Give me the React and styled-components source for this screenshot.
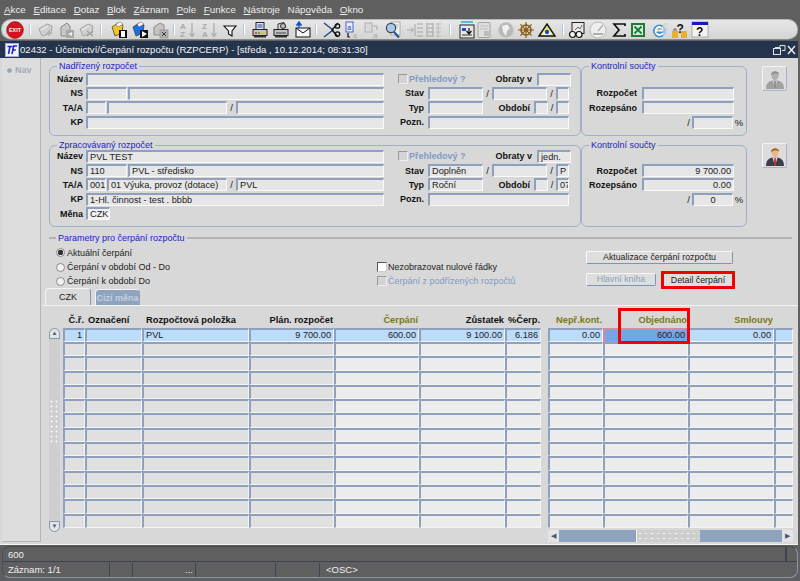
import React from 'react';
import styled, { createGlobalStyle } from 'styled-components';

const GlobalStyle = createGlobalStyle`
  html, body { margin: 0; padding: 0; background: #606060; }
  body { font-family: "Liberation Sans", Arial, sans-serif; font-size: 9.2px; }
  * { box-sizing: border-box; }
`;

const Page = styled.div`
  width: 800px;
  height: 581px;
  overflow: hidden;
  display: flex;
  flex-direction: column;
  background: #5f5f5f;
`;

/* menu + toolbar */
const MenuBar = styled.div`
  height: 19px;
  display: flex;
  align-items: center;
  padding-left: 4px;
  gap: 7.6px;
  color: #ececec;
  font-size: 9.8px;
  u { text-underline-offset: 1px; }
`;

const Toolbar = styled.div`
  height: 21px;
  margin: 0 2px 1px 1px;
  padding-left: 5px;
  display: flex;
  align-items: center;
  background: linear-gradient(#e6e6e6, #d4d4d4);
  border-radius: 10px;
  border: 1px solid #b8b8b8;
  border-bottom-color: #8a8a8a;
`;

const ToolSlot = styled.div`
  width: 16px;
  height: 18px;
  flex: none;
  margin-left: ${p => p.$gap}px;
  display: flex;
  align-items: center;
  justify-content: center;
  svg { flex: none; }
`;

const ToolSep = styled.i`
  width: 2px;
  height: 11px;
  background: #b4c4dc;
  border-right: 1px solid #fff;
`;

/* window */
const Window = styled.div`
  width: 798px;
  height: 504px;
  display: flex;
  flex-direction: column;
  background: #d8d8d8;
  border-bottom: 1px solid #f4f4f4;
`;

const TitleBar = styled.div`
  height: 17px;
  flex: none;
  display: flex;
  align-items: center;
  padding: 0 2px 0 5px;
  background: #24344c;
  color: #f2f2f2;
  font-size: 9.6px;
`;

const TitleText = styled.span`
  flex: 1;
  margin-left: 1px;
`;

const WinBody = styled.div`
  flex: 1;
  display: flex;
  min-height: 0;
`;

const NavRail = styled.div`
  width: 39px;
  flex: none;
  margin: 0 2px 2px 2px;
  padding: 7px 0 0 4px;
  display: flex;
  align-items: flex-start;
  gap: 2px;
  background: #dddddd;
  border-right: 1px solid #b4b4b4;
  border-bottom: 1px solid #b4b4b4;
  color: #a2acb8;
  font-weight: bold;
  font-size: 9px;
`;

const NavDot = styled.span`
  width: 7px;
  height: 7px;
  margin-top: 2px;
  border-radius: 50%;
  background: #9aa6b2;
  border: 1px solid #eee;
`;

const Content = styled.div`
  flex: 1;
  display: flex;
  flex-direction: column;
  min-width: 0;
  padding-top: 2px;
`;

const BudgetRow = styled.div`
  display: flex;
  margin: 0 0 ${p => p.$mb}px 6px;
`;

const Legend = styled.legend`
  margin-left: 7px;
  margin-bottom: ${p => p.$tight ? -2 : 0}px;
  padding: 0 2px;
  height: 12px;
  line-height: 12px;
  color: #2222c4;
  font-size: 9px;
`;

const Group = styled.fieldset`
  margin: 0;
  min-width: 0;
  width: ${p => p.$w}px;
  padding: 0 0 ${p => p.$tight ? 5 : 6}px 0;
  border: 1px solid #9fb0c8;
  border-radius: 6px;
`;

const GroupInner = styled.div`
  display: flex;
`;

const Col = styled.div`
  width: ${p => p.$w}px;
  flex: none;
`;

const Row = styled.div`
  height: 14.3px;
  display: flex;
  align-items: center;
`;

const Label = styled.label`
  flex: none;
  width: ${p => p.$w}px;
  margin-right: ${p => p.$mr ?? 3}px;
  text-align: right;
  font-weight: bold;
  font-size: 9px;
  color: #111;
  white-space: nowrap;
`;

const Field = styled.div`
  flex: none;
  width: ${p => p.$w}px;
  height: 13px;
  padding: 0 2px;
  line-height: 10px;
  font-size: 9.2px;
  text-align: ${p => p.$right ? 'right' : p.$center ? 'center' : 'left'};
  white-space: nowrap;
  overflow: hidden;
  color: #222;
  background: ${p => p.$light ? '#f0f0f0' : '#e6e6e6'};
  border-style: solid;
  border-width: 2px 1px 1px 2px;
  border-color: #8ea0bc #fafafa #fafafa #8ea0bc;
  margin-left: ${p => p.$ml ?? 0}px;
`;

const Slash = styled.span`
  flex: none;
  width: ${p => p.$w}px;
  text-align: ${p => p.$end ? 'right' : 'center'};
  padding-right: ${p => p.$end ? 2 : 0}px;
  font-size: 9.5px;
  color: #222;
`;

const CheckBox = styled.span`
  flex: none;
  width: 10px;
  height: 10px;
  margin-left: ${p => p.$ml ?? 0}px;
  margin-right: 1px;
  background: ${p => p.$off ? '#d4d4d4' : '#ffffff'};
  border-style: solid;
  border-width: 1px;
  border-color: ${p => p.$off ? '#999 #eee #eee #999' : '#555 #ccc #ccc #555'};
`;

const CheckText = styled.span`
  white-space: nowrap;
  color: ${p => p.$off ? '#7f9bc5' : '#222'};
  font-weight: ${p => p.$bold ? 'bold' : 'normal'};
  font-size: 9px;
`;

const Spacer = styled.span`
  flex: 1;
`;

const PhotoButton = styled.div`
  width: 25px;
  height: 25px;
  flex: none;
  margin: ${p => p.$mt}px 0 0 15px;
  display: flex;
  align-items: center;
  justify-content: center;
  background: #dcdcdc;
  border: 1px solid;
  border-color: #f4f4f4 #a8b4c8 #a8b4c8 #f4f4f4;
  border-radius: 2px;
`;

/* parameters */
const ParamGroup = styled.fieldset`
  margin: 0 6px 0 6px;
  padding: 0;
  min-width: 0;
  border: none;
  border-top: 2px solid #b4b4b4;
`;

const ParamGrid = styled.div`
  display: grid;
  grid-template-columns: 321px 209px 150px;
  height: 44px;
  padding: 2px 0 0 7px;
`;

const Radio = styled.span`
  width: 9px;
  height: 9px;
  flex: none;
  margin-right: 2px;
  border-radius: 50%;
  background: ${p => p.$on ? 'radial-gradient(circle, #333 0 2.5px, #eee 3px)' : '#f2f2f2'};
  border: 1px solid #8a8a8a;
`;

const OptionText = styled.span`
  color: #222;
  font-size: 9px;
`;

const ButtonCol = styled.div`
  display: flex;
  flex-direction: column;
  gap: 10px;
  padding-top: 5px;
`;

const Button = styled.div`
  width: ${p => p.$w}px;
  height: 13px;
  flex: none;
  text-align: center;
  line-height: 11px;
  font-size: 8.8px;
  color: ${p => p.$off ? '#8ea0b8' : '#222'};
  background: #dedede;
  border: 1px solid;
  border-color: #f6f6f6 #7f94b4 #7f94b4 #f6f6f6;
  border-radius: 2px;
`;

const ButtonRow = styled.div`
  display: flex;
  align-items: center;
  gap: 5px;
  margin-top: -3px;
`;

const RedBox = styled.div`
  width: 74px;
  height: 18px;
  flex: none;
  display: flex;
  align-items: center;
  justify-content: center;
  border: 3px solid #f00000;
  font-size: 8.8px;
  color: #222;
  background: #dedede;
`;

/* tabs */
const Tabs = styled.div`
  display: flex;
  align-items: flex-end;
  height: 17px;
  margin-left: 2px;
  gap: 4px;
`;

const Tab = styled.div`
  width: ${p => p.$w}px;
  height: ${p => p.$active ? 17 : 16}px;
  text-align: center;
  line-height: 16px;
  font-size: 9px;
  white-space: nowrap;
  color: ${p => p.$active ? '#222' : '#c4d0de'};
  font-weight: ${p => p.$active ? 'normal' : 'bold'};
  background: ${p => p.$active ? '#dadada' : '#8ea3bd'};
  border-radius: 4px 4px 0 0;
  border-top: 1px solid #f4f4f4;
  border-left: 1px solid #f4f4f4;
  border-right: 1px solid ${p => p.$active ? '#8196b6' : '#8ea3bd'};
`;

const TabPanel = styled.div`
  position: relative;
  flex: 1;
  display: flex;
  border-top: 1px solid #f4f4f4;
  padding: 0 0 0 6px;
`;

const VScroll = styled.div`
  width: 11px;
  height: 204px;
  flex: none;
  margin-top: 22px;
  display: flex;
  flex-direction: column;
  align-items: center;
  background: #cfcfcf;
  border-radius: 6px;
`;

const ScrollEnd = styled.div`
  width: 11px;
  height: 11px;
  flex: none;
  display: flex;
  align-items: center;
  justify-content: center;
  background: #e4e4e4;
  border: 1px solid #8196b6;
  border-radius: ${p => p.$r};
  color: #4a5a70;
  font-size: 6px;
  line-height: 1;
`;

const VThumbDots = styled.div`
  width: 11px;
  height: 45px;
  margin-top: 60px;
  background: radial-gradient(circle, #f8f8f8 0 0.9px, transparent 1.1px) 0 0 / 5px 5px;
`;

const Table = styled.div`
  display: grid;
  grid-template-columns: ${p => p.$cols};
  grid-template-rows: 22px;
  grid-auto-rows: 14.3px;
  margin-left: ${p => p.$ml}px;
  align-self: flex-start;
  flex: none;
`;

const HeadCell = styled.div`
  display: flex;
  align-items: center;
  justify-content: ${p => p.$align || 'flex-end'};
  padding: 6px ${p => p.$pr ?? 1}px 0 ${p => p.$pl ?? 0}px;
  font-weight: bold;
  font-size: 9.3px;
  white-space: nowrap;
  color: ${p => p.$olive ? '#7a7a10' : '#111'};
`;

const Cell = styled.div`
  padding: 0 2px;
  line-height: 11px;
  font-size: 9.2px;
  overflow: hidden;
  white-space: nowrap;
  text-align: ${p => p.$right ? 'right' : 'left'};
  color: #222;
  background: ${p => p.$current ? '#72a6e6' : p.$sel ? '#bcdcfc' : p.$light ? '#ececec' : '#e0e0e0'};
  border-style: solid;
  border-width: 2px 1px 1px 2px;
  border-color: ${p => p.$current ? '#d88a9a' : '#8ea0bc #f4f4f4 #f4f4f4 #8ea0bc'};
`;

const RightSide = styled.div`
  display: flex;
  flex-direction: column;
  margin-left: 7px;
  width: 245px;
  flex: none;
`;

const HScroll = styled.div`
  height: 12px;
  margin-top: 2px;
  display: flex;
  background: #8ea3bd;
`;

const HEnd = styled.div`
  width: 11px;
  flex: none;
  display: flex;
  align-items: center;
  justify-content: center;
  background: #e4e4e4;
  color: #4a5a70;
  font-size: 7px;
`;

const HThumb = styled.div`
  width: 64px;
  margin-left: 77px;
  margin-right: 82px;
  background: #cecece radial-gradient(circle, #f8f8f8 0 0.9px, transparent 1.1px) 0 1px / 6px 5px;
  border-left: 1px solid #f4f4f4;
`;

const Highlight = styled.div`
  position: absolute;
  left: 575px;
  top: 2px;
  width: 72px;
  height: 36px;
  border: 3px solid #f00000;
  pointer-events: none;
`;

/* status bar */
const StatusBar = styled.div`
  height: 32px;
  margin: 1px 2px 0 2px;
  border: 1px solid #8a96a8;
  border-top-color: #4a4a4a;
  border-left-color: #4a5060;
  border-radius: 8px;
  color: #efefef;
  font-size: 9.5px;
  display: flex;
  flex-direction: column;
`;

const StatusLine = styled.div`
  height: 15px;
  flex: none;
  padding-left: 5px;
  display: flex;
  align-items: center;
  justify-content: space-between;
  border-bottom: 1px solid #3c4454;
`;

const StatusEnd = styled.i`
  width: 2px;
  height: 14px;
  margin-right: 10px;
  background: #3c4454;
`;

const StatusCells = styled.div`
  flex: 1;
  display: flex;
  align-items: center;
`;

const StatusCell = styled.div`
  width: ${p => p.$w}px;
  height: 14px;
  line-height: 14px;
  flex: none;
  padding-left: ${p => p.$pl ?? 0}px;
  text-align: ${p => p.$right ? 'right' : 'left'};
  padding-right: ${p => p.$right ? 2 : 0}px;
  border-right: ${p => p.$last ? 'none' : '1px solid #3c4454'};
`;

/* drawings */
const Svg = ({ children, s = 18 }) => (
  <svg width={s} height={s} viewBox="0 0 18 18">{children}</svg>
);

const FolderDisk = ({ c, inner, box }) => (
  <Svg>
    <path d="M2 6 L8 2 L13 4 L12 12 L5 15 Z" fill={c} stroke="#333" strokeWidth=".7" />
    <path d="M6 3 L10 1 L13 3 L8 6 Z" fill="#fff" stroke="#555" strokeWidth=".5" />
    <rect x="9" y="9" width="8" height="8" fill={box} />
    {inner}
  </Svg>
);

const GrayDoc = ({ mark }) => (
  <Svg>
    <path d="M2 8 L10 3 L15 5 L14 12 L5 15 Z" fill="#d0d0d0" stroke="#a4a4a4" />
    <path d="M4 9 L11 5" stroke="#eee" />
    {mark}
  </Svg>
);

const icons = {
  exit: (
    <svg width="18" height="18" viewBox="0 0 18 18">
      <circle cx="9" cy="9" r="8.4" fill="#d81020" stroke="#90101a" strokeWidth=".6" />
      <text x="9" y="11" textAnchor="middle" fontSize="5.4" fontWeight="bold" fill="#fff" fontFamily="Liberation Sans">EXIT</text>
    </svg>
  ),
  grayAdd: <GrayDoc mark={<path d="M12 9v6M9 12h6" stroke="#b0b0b0" strokeWidth="1.6" />} />,
  grayBack: (
    <Svg>
      <path d="M4 15 V6 L10 2 L13 5 V15 Z" fill="#c8c8c8" stroke="#8a8a8a" />
      <rect x="9" y="9" width="8" height="8" fill="#a8a8a8" />
      <path d="M15 11 L11 13 L15 15 Z" fill="#eee" />
    </Svg>
  ),
  grayX: <GrayDoc mark={<path d="M9 10l6 5M15 10l-6 5" stroke="#a0a0a0" strokeWidth="1.4" />} />,
  yellowSave: (
    <FolderDisk c="#f4c420" box="#101010" inner={<path d="M11 10h4v6h-4z" fill="#fff" />} />
  ),
  bluePlay: (
    <FolderDisk c="#1c70e0" box="#101010" inner={<path d="M11 10 L16 13 L11 16 Z" fill="#fff" />} />
  ),
  grayBox: (
    <Svg>
      <path d="M3 14 V6 L9 2 L13 4 V14 Z" fill="#c4c4c4" stroke="#8c8c8c" />
      <rect x="9" y="9" width="8" height="8" fill="#b4b4b4" stroke="#777" strokeWidth=".5" />
      <path d="M11 11l4 4M15 11l-4 4" stroke="#333" />
    </Svg>
  ),
  sortAZ: (
    <Svg>
      <text x="1" y="8" fontSize="8" fontWeight="bold" fill="#a8a8a8" fontFamily="Liberation Sans">A</text>
      <text x="1" y="16" fontSize="8" fontWeight="bold" fill="#a8a8a8" fontFamily="Liberation Sans">Z</text>
      <path d="M13 2v13M10.5 12l2.5 3.5 2.5-3.5" fill="none" stroke="#a8a8a8" strokeWidth="1.2" />
    </Svg>
  ),
  sortZA: (
    <Svg>
      <text x="1" y="8" fontSize="8" fontWeight="bold" fill="#a8a8a8" fontFamily="Liberation Sans">Z</text>
      <text x="1" y="16" fontSize="8" fontWeight="bold" fill="#a8a8a8" fontFamily="Liberation Sans">A</text>
      <path d="M13 2v13M10.5 12l2.5 3.5 2.5-3.5" fill="none" stroke="#a8a8a8" strokeWidth="1.2" />
    </Svg>
  ),
  funnel: (
    <Svg>
      <path d="M3 5 H15 L11 10 V15 L7.5 13 V10 Z" fill="#f4f4f4" stroke="#111" strokeWidth="1.1" />
    </Svg>
  ),
  printer: (
    <Svg>
      <rect x="5" y="1.5" width="8" height="7" fill="#dfe6f4" stroke="#222" />
      <path d="M6.5 4h5M6.5 6h5" stroke="#2244aa" />
      <rect x="2" y="8.5" width="14" height="6" fill="#c4c4c4" stroke="#222" />
      <path d="M4 12h2" stroke="#e02020" strokeWidth="1.4" />
      <path d="M7 12h2" stroke="#20a020" strokeWidth="1.4" />
      <path d="M10 12h4" stroke="#e0c020" strokeWidth="1.4" />
      <rect x="3" y="15" width="12" height="1.5" fill="#333" />
    </Svg>
  ),
  preview: (
    <Svg>
      <path d="M6 8 V3 L12 1.5 L14 7" fill="#d8d8d8" stroke="#333" />
      <circle cx="11" cy="5" r="2.5" fill="#bbb" stroke="#333" />
      <rect x="2" y="8.5" width="14" height="6" fill="#c0c0c0" stroke="#222" />
      <path d="M4 12h10" stroke="#666" strokeWidth="1.4" />
      <rect x="3" y="15" width="12" height="1.5" fill="#333" />
    </Svg>
  ),
  mail: (
    <Svg>
      <rect x="3" y="7" width="14" height="9" fill="#f6f6f6" stroke="#111" />
      <path d="M3 7 L10 12 L17 7" fill="none" stroke="#111" />
      <path d="M6 7V3M3.5 4.5 L6 1 L8.5 4.5" fill="#1050d0" stroke="#1050d0" strokeWidth="1.4" />
    </Svg>
  ),
  cut: (
    <Svg>
      <path d="M1 2 L10 9 L1 16" fill="none" stroke="#1a4a8a" strokeWidth="1.4" />
      <path d="M15 2 L9 9 L15 16" fill="none" stroke="#111" strokeWidth="1.4" />
      <circle cx="14.5" cy="5" r="2.2" fill="none" stroke="#111" strokeWidth="1.3" />
      <circle cx="14.5" cy="13" r="2.2" fill="none" stroke="#111" strokeWidth="1.3" />
    </Svg>
  ),
  copyA: (
    <Svg>
      <rect x="4" y="1" width="7" height="10" fill="#eef" stroke="#2244bb" strokeWidth=".8" />
      <text x="5.2" y="8.5" fontSize="7" fill="#1030c0" fontFamily="Liberation Sans">a</text>
      <path d="M6 12v4h2" fill="none" stroke="#111" strokeWidth="1.2" />
      <text x="11" y="16.5" fontSize="7" fill="#a8a8a8" fontFamily="Liberation Sans">a</text>
    </Svg>
  ),
  grayA: (
    <Svg>
      <rect x="2" y="2" width="7" height="9" fill="#d8d8d8" stroke="#b0b0b0" />
      <path d="M10 5h4v4" fill="none" stroke="#aaa" />
      <text x="10" y="16.5" fontSize="8" fill="#aaa" fontFamily="Liberation Sans">a</text>
    </Svg>
  ),
  search: (
    <Svg>
      <rect x="7" y="1" width="9" height="13" fill="#eee" stroke="#999" strokeWidth=".7" />
      <path d="M9 4h5M9 6h5" stroke="#888" strokeWidth=".6" />
      <circle cx="7" cy="7" r="4.6" fill="#a8c8f0" stroke="#444" strokeWidth="1.2" />
      <path d="M10 11 L15 16.5" stroke="#1a5a9a" strokeWidth="2.2" />
    </Svg>
  ),
  grayLines: (
    <Svg>
      <path d="M9 3v12M11 3h6M11 7h6M11 11h6M11 15h6" stroke="#a6a6a6" />
      <path d="M1 9h6M5 6.5 L7.5 9 L5 11.5" fill="none" stroke="#a6a6a6" />
    </Svg>
  ),
  grayCols: (
    <Svg>
      <path d="M3 2v14M3 3h6M3 7h6M3 11h6M3 15h6M9 2v14" fill="none" stroke="#a6a6a6" />
      <path d="M12 3h5M12 7h5M12 11h5M12 15h5M14 2v14" fill="none" stroke="#bbb" />
    </Svg>
  ),
  tableIcon: (
    <Svg>
      <path d="M3 1h12" stroke="#30b0e0" strokeWidth="1.6" />
      <rect x="2" y="4" width="14" height="13" fill="#e8e8e8" stroke="#222" />
      <path d="M4 7h4v3H4z" fill="#2050c0" />
      <path d="M11 7v5M8.5 10 L11 13 L13.5 10" fill="none" stroke="#111" strokeWidth="1.2" />
      <path d="M4 14h10" stroke="#333" />
    </Svg>
  ),
  grayPage: (
    <Svg>
      <rect x="3" y="1.5" width="12" height="15" rx="1" fill="#dedede" stroke="#a2a2a2" />
      <path d="M5 5h8M5 8h8" stroke="#bbb" />
      <rect x="9" y="10" width="5" height="5" fill="#bdbdbd" />
    </Svg>
  ),
  globe: (
    <Svg>
      <circle cx="9" cy="9" r="7.5" fill="#b8b8b8" stroke="#c8c8c8" />
      <path d="M5 5 L10 3.5 L13 7 L10 10 L9 15 L6 11 Z" fill="#f0f0f0" />
    </Svg>
  ),
  wheel: (
    <Svg>
      <circle cx="9" cy="9" r="5" fill="none" stroke="#8a5a10" strokeWidth="1.6" />
      <circle cx="9" cy="9" r="1.6" fill="#8a5a10" />
      <path d="M9 1v16M1 9h16M3.4 3.4l11.2 11.2M14.6 3.4L3.4 14.6" stroke="#8a5a10" strokeWidth="1.2" />
    </Svg>
  ),
  triangle: (
    <Svg>
      <path d="M1 15 L9 3 L17 15 Z" fill="#f4e070" stroke="#111" strokeWidth="1.4" />
      <path d="M4 13 Q9 6 14 13 Q9 15 4 13 Z" fill="#fff" />
      <circle cx="9" cy="11" r="2.2" fill="#1050c0" />
    </Svg>
  ),
  glasses: (
    <Svg>
      <rect x="4" y="1.5" width="12" height="11" fill="#e8e8e8" stroke="#222" />
      <path d="M7 9 L10 6 L12 8 L14 4" fill="none" stroke="#666" />
      <circle cx="4.5" cy="13.5" r="3" fill="#f4f4f4" stroke="#111" strokeWidth="1.2" />
      <circle cx="11" cy="13.5" r="3" fill="#f4f4f4" stroke="#111" strokeWidth="1.2" />
    </Svg>
  ),
  gauge: (
    <Svg>
      <circle cx="9" cy="9" r="8" fill="#eeeeee" stroke="#bbb" />
      <path d="M9 10 L14 4" stroke="#aaa" strokeWidth="1.2" />
      <path d="M4 13h10" stroke="#b0b0b0" strokeWidth="2" />
    </Svg>
  ),
  sigma: (
    <Svg>
      <path d="M15 5 V3 H4 L9 9 L4 15 H15 V13" fill="none" stroke="#111" strokeWidth="1.7" />
    </Svg>
  ),
  excel: (
    <Svg>
      <rect x="2" y="2" width="14" height="14" fill="#1f7a3c" />
      <rect x="4" y="4" width="10" height="10" fill="#d8ecd8" />
      <path d="M5.5 5.5l7 7M12.5 5.5l-7 7" stroke="#1f7a3c" strokeWidth="1.8" />
    </Svg>
  ),
  ie: (
    <Svg>
      <circle cx="8.5" cy="10" r="6.5" fill="#3a8ae0" />
      <path d="M5 9.5h7M12 12 A4 4 0 1 1 12 8" fill="none" stroke="#fff" strokeWidth="1.8" />
      <path d="M2 15 Q9 8 15 2" fill="none" stroke="#e8c040" strokeWidth="1" />
      <rect x="12" y="3" width="5" height="13" fill="#d0d8e8" opacity=".7" />
    </Svg>
  ),
  helpLock: (
    <Svg>
      <text x="5.5" y="12" fontSize="12" fontWeight="bold" fill="#111" fontFamily="Liberation Sans">?</text>
      <rect x="1" y="10" width="6" height="7" fill="#e8b030" />
      <rect x="10" y="10" width="6" height="7" fill="#e8b030" />
      <path d="M3 10V8h2v2" fill="none" stroke="#666" />
    </Svg>
  ),
  helpWin: (
    <Svg>
      <rect x="1" y="1" width="16" height="15" fill="#f2f2f2" stroke="#888" strokeWidth=".6" />
      <rect x="1" y="1" width="16" height="3" fill="#1818c0" />
      <text x="5" y="15" fontSize="12" fontWeight="bold" fill="#111" fontFamily="Liberation Sans">?</text>
    </Svg>
  ),
};

const Person = ({ off }) => (
  <svg width="20" height="20" viewBox="0 0 20 20">
    <path d="M1 20 C1 13 5 11.5 10 11.5 C15 11.5 19 13 19 20 Z" fill={off ? '#a0a0a0' : '#3c3c48'} />
    <path d="M7.5 11.5 L10 20 L12.5 11.5 Z" fill={off ? '#c4c4c4' : '#e8e8e8'} />
    <path d="M9.3 12 L10.7 12 L11 18 L10 20 L9 18 Z" fill={off ? '#8c8c8c' : '#c02020'} />
    <ellipse cx="10" cy="6.5" rx="3.6" ry="4.6" fill={off ? '#b0b0b0' : '#e8b888'} />
    <path d="M6 6.5 C5.5 1.5 14.5 1 14 6 C13 3.5 8 3.5 6 6.5 Z" fill={off ? '#8a8a8a' : '#a05a18'} />
  </svg>
);

const Logo = () => (
  <svg width="14" height="14" viewBox="0 0 14 14">
    <rect x=".5" y=".5" width="13" height="13" fill="#f4f4ff" stroke="#9fb0e0" />
    <path d="M2.5 3.5h5M5 3.5 L3.5 11" stroke="#1c24c8" strokeWidth="1.6" fill="none" />
    <path d="M7 11 L8.6 3h3.4M7.8 7h3" stroke="#1c24c8" strokeWidth="1.6" fill="none" />
  </svg>
);

const WindowControls = () => (
  <svg width="24" height="12" viewBox="0 0 24 12">
    <path d="M3 3.5h5v-2h5v5h-3" fill="none" stroke="#dfe4ea" />
    <rect x="1.5" y="4.5" width="7" height="6" fill="none" stroke="#dfe4ea" />
    <path d="M16 2l7 8M23 2l-7 8" stroke="#f0f0f0" strokeWidth="1.4" />
  </svg>
);

const tools = [
  [15, 'exit'], [30], [46, 'grayAdd'], [66, 'grayBack'], [87, 'grayX'], [101],
  [119, 'yellowSave'], [140, 'bluePlay'], [160, 'grayBox'], [174],
  [188, 'sortAZ'], [210, 'sortZA'], [230, 'funnel'], [244],
  [260, 'printer'], [281, 'preview'], [302, 'mail'], [316],
  [332, 'cut'], [351, 'copyA'], [372, 'grayA'], [393, 'search'], [415, 'grayLines'], [433, 'grayCols'], [450],
  [467, 'tableIcon'], [484, 'grayPage'], [506, 'globe'], [526, 'wheel'], [547, 'triangle'], [563],
  [577, 'glasses'], [598, 'gauge'], [619, 'sigma'], [638, 'excel'], [660, 'ie'], [680, 'helpLock'], [700, 'helpWin'],
];

const menus = [
  ['A', 'kce'], ['E', 'ditace'], ['D', 'otaz'], ['B', 'lok'], ['Z', 'áznam'],
  ['P', 'ole'], ['F', 'unkce'], ['N', 'ástroje'], ['Nápo', 'věda', 'v'], ['O', 'kno'],
];

const leftCols = '22px 57px 107px 85px 85px 86px 36px';
const rightCols = '55px 85px 86px 19px';
const ROWS = 14;

const BudgetForm = ({ title, v = {}, photoOff, extra }) => (
  <BudgetRow $mb={extra ? 5 : 3}>
    <Group $w={532} $tight={extra}>
      <Legend $tight={extra}>{title}</Legend>
      <GroupInner>
        <Col $w={334}>
          <Row><Label $w={33}>Název</Label><Field $w={298}>{v.name}</Field></Row>
          <Row><Label $w={33}>NS</Label><Field $w={41}>{v.ns}</Field><Field $w={256} $ml={1}>{v.nsName}</Field></Row>
          <Row>
            <Label $w={33}>TA/A</Label>
            <Field $w={20}>{v.ta}</Field>
            <Field $w={120} $ml={1}>{v.taName}</Field>
            <Slash $w={9}>/</Slash>
            <Field $w={148}>{v.a}</Field>
          </Row>
          <Row><Label $w={33}>KP</Label><Field $w={298}>{v.kp}</Field></Row>
          {extra && <Row><Label $w={33}>Měna</Label><Field $w={24} $light>CZK</Field></Row>}
        </Col>
        <Col $w={187}>
          <Row>
            <CheckBox $ml={14} $off />
            <CheckText $off $bold>Přehledový ?</CheckText>
            <Spacer />
            <Label $w={50} $mr={5}>Obraty v</Label>
            <Field $w={34}>{v.units}</Field>
          </Row>
          <Row>
            <Label $w={40} $mr={4}>Stav</Label>
            <Field $w={55}>{v.state}</Field>
            <Slash $w={9}>/</Slash>
            <Field $w={55} />
            <Slash $w={9}>/</Slash>
            <Field $w={13}>{v.p}</Field>
          </Row>
          <Row>
            <Label $w={40} $mr={4}>Typ</Label>
            <Field $w={55}>{v.type}</Field>
            <Label $w={47} $mr={4}>Období</Label>
            <Field $w={14} />
            <Slash $w={8}>/</Slash>
            <Field $w={13}>{v.period}</Field>
          </Row>
          <Row>
            <Label $w={40} $mr={4}>Pozn.</Label>
            <Field $w={141} />
          </Row>
        </Col>
      </GroupInner>
    </Group>
    <Group $w={166} $tight={extra}>
      <Legend $tight={extra}>Kontrolní součty</Legend>
      <Row />
      <Row><Label $w={55} $mr={5}>Rozpočet</Label><Field $w={92} $right>{v.budget}</Field></Row>
      <Row><Label $w={55} $mr={5}>Rozepsáno</Label><Field $w={92} $right>{v.split}</Field></Row>
      <Row>
        <Slash $w={110} $end>/</Slash>
        <Field $w={41} $center>{v.pct}</Field>
        <Slash $w={12}>%</Slash>
      </Row>
    </Group>
    <PhotoButton $mt={extra ? 4 : 6}><Person off={photoOff} /></PhotoButton>
  </BudgetRow>
);

const App = () => {
  let prev = -1;
  return (
    <>
      <GlobalStyle />
      <Page>
        <MenuBar>
          {menus.map(([a, b, c]) => (
            <span key={a + b}>
              {c ? <>Náp<u>o</u>věda</> : <><u>{a}</u>{b}</>}
            </span>
          ))}
        </MenuBar>
        <Toolbar>
          {tools.map(([cx, name]) => {
            const left = cx - 8;
            const gap = prev < 0 ? 0 : left - prev;
            prev = left + 16;
            return (
              <ToolSlot key={cx} $gap={gap}>
                {name ? icons[name] : <ToolSep />}
              </ToolSlot>
            );
          })}
        </Toolbar>
        <Window>
          <TitleBar>
            <Logo />
            <TitleText>02432 - Účetnictví/Čerpání rozpočtu (RZPCERP) - [středa , 10.12.2014; 08:31:30]</TitleText>
            <WindowControls />
          </TitleBar>
          <WinBody>
            <NavRail><NavDot />Nav</NavRail>
            <Content>
              <BudgetForm title="Nadřízený rozpočet" photoOff />
              <BudgetForm
                title="Zpracovávaný rozpočet"
                extra
                v={{
                  name: 'PVL TEST', ns: '110', nsName: 'PVL - středisko', ta: '001',
                  taName: '01 Výuka, provoz (dotace)', a: 'PVL', kp: '1-Hl. činnost - test . bbbb',
                  units: 'jedn.', state: 'Doplněn', p: 'P', type: 'Roční', period: '07',
                  budget: '9 700.00', split: '0.00', pct: '0',
                }}
              />
              <ParamGroup>
                <Legend>Parametry pro čerpání rozpočtu</Legend>
                <ParamGrid>
                  <div>
                    <Row><Radio $on /><OptionText>Aktuální čerpání</OptionText></Row>
                    <Row><Radio /><OptionText>Čerpání v období Od - Do</OptionText></Row>
                    <Row><Radio /><OptionText>Čerpání k období Do</OptionText></Row>
                  </div>
                  <div>
                    <Row />
                    <Row><CheckBox /><CheckText>Nezobrazovat nulové řádky</CheckText></Row>
                    <Row><CheckBox $off /><CheckText $off>Čerpání z podřízených rozpočtů</CheckText></Row>
                  </div>
                  <ButtonCol>
                    <Button $w={147}>Aktualizace čerpání rozpočtu</Button>
                    <ButtonRow>
                      <Button $w={70} $off>Hlavní kniha</Button>
                      <RedBox>Detail čerpání</RedBox>
                    </ButtonRow>
                  </ButtonCol>
                </ParamGrid>
              </ParamGroup>
              <Tabs>
                <Tab $w={46} $active>CZK</Tab>
                <Tab $w={45}>Cizí měna</Tab>
              </Tabs>
              <TabPanel>
                <VScroll>
                  <ScrollEnd $r="6px 6px 0 0">▲</ScrollEnd>
                  <VThumbDots />
                  <Spacer />
                  <ScrollEnd $r="0 0 6px 6px">▼</ScrollEnd>
                </VScroll>
                <Table $cols={leftCols} $ml={3}>
                  <HeadCell>Č.ř.</HeadCell>
                  <HeadCell $align="flex-start" $pl={3}>Označení</HeadCell>
                  <HeadCell $align="flex-start" $pl={4}>Rozpočtová položka</HeadCell>
                  <HeadCell>Plán. rozpočet</HeadCell>
                  <HeadCell $olive>Čerpání</HeadCell>
                  <HeadCell>Zůstatek</HeadCell>
                  <HeadCell>%Čerp.</HeadCell>
                  {Array.from({ length: ROWS }).map((_, i) => (
                    <React.Fragment key={i}>
                      <Cell $sel={i === 0} $right>{i === 0 && '1'}</Cell>
                      <Cell $sel={i === 0} />
                      <Cell $sel={i === 0}>{i === 0 && 'PVL'}</Cell>
                      <Cell $sel={i === 0} $right>{i === 0 && '9 700.00'}</Cell>
                      <Cell $sel={i === 0} $light $right>{i === 0 && '600.00'}</Cell>
                      <Cell $sel={i === 0} $light $right>{i === 0 && '9 100.00'}</Cell>
                      <Cell $sel={i === 0} $light $right>{i === 0 && '6.186'}</Cell>
                    </React.Fragment>
                  ))}
                </Table>
                <RightSide>
                  <Table $cols={rightCols} $ml={0}>
                    <HeadCell $olive>Nepř.kont.</HeadCell>
                    <HeadCell $olive>Objednáno</HeadCell>
                    <HeadCell $olive>Smlouvy</HeadCell>
                    <HeadCell />
                    {Array.from({ length: ROWS }).map((_, i) => (
                      <React.Fragment key={i}>
                        <Cell $sel={i === 0} $light $right>{i === 0 && '0.00'}</Cell>
                        <Cell $current={i === 0} $light $right>{i === 0 && '600.00'}</Cell>
                        <Cell $sel={i === 0} $light $right>{i === 0 && '0.00'}</Cell>
                        <Cell $sel={i === 0} $light />
                      </React.Fragment>
                    ))}
                  </Table>
                  <HScroll>
                    <HEnd>◀</HEnd>
                    <HThumb />
                    <HEnd>▶</HEnd>
                  </HScroll>
                </RightSide>
                <Highlight />
              </TabPanel>
            </Content>
          </WinBody>
        </Window>
        <StatusBar>
          <StatusLine>600<StatusEnd /></StatusLine>
          <StatusCells>
            <StatusCell $w={107} $pl={5}>Záznam: 1/1</StatusCell>
            <StatusCell $w={23} />
            <StatusCell $w={63} $right>...</StatusCell>
            <StatusCell $w={80} />
            <StatusCell $w={44} />
            <StatusCell $w={100} $pl={6} $last>&lt;OSC&gt;</StatusCell>
          </StatusCells>
        </StatusBar>
      </Page>
    </>
  );
};

export default App;
